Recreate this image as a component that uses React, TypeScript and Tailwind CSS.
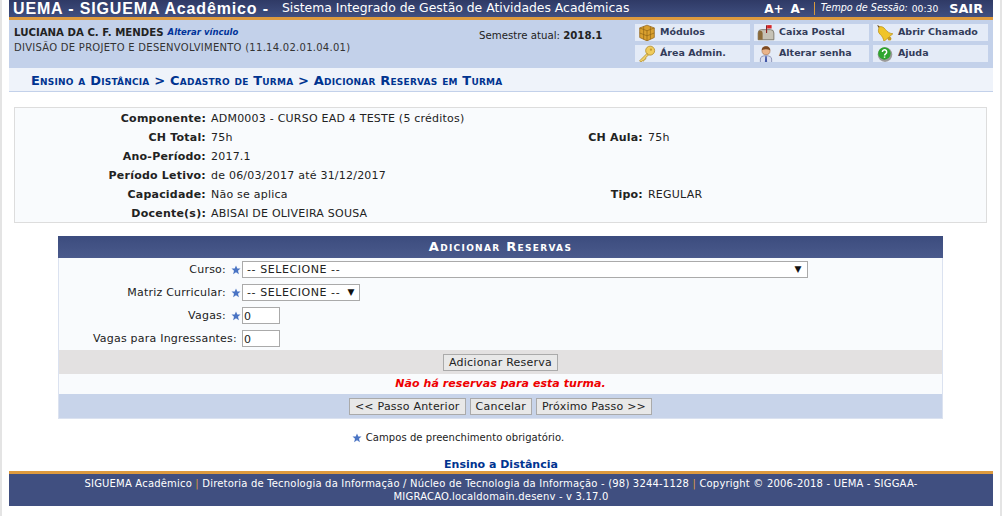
const verdana = "font-['Verdana','DejaVu_Sans',sans-serif]";

function Star() {
  return (
    <svg viewBox="0 0 10 10" className="h-[10px] w-[10px] shrink-0">
      <path d="M5 .6l1.3 3h3.2L7 5.7l.9 3.5L5 7.3 2.100 9.200 3 5.700.5 3.600h3.200z" fill="#4a74c4" />
    </svg>
  );
}

function BoxIcon() {
  return (
    <svg viewBox="0 0 16 16" className="h-[18px] w-[18px]">
      <path d="M1.500 3.500L8 1l6.500 2.500V12L8 15l-6.500-3z" fill="#d9a02f" stroke="#8a5a10" strokeWidth=".6" />
      <path d="M1.500 8L8 10.500 14.500 8M1.500 3.500L8 6l6.500-2.500M8 6v9M5 2.200v11.400M11 2.200v11.400" fill="none" stroke="#8f6414" strokeWidth=".6" />
    </svg>
  );
}

function KeyIcon() {
  return (
    <svg viewBox="0 0 16 16" className="h-[18px] w-[18px]">
      <circle cx="10.800" cy="5" r="4" fill="#f0cc5c" stroke="#b08a28" strokeWidth=".7" />
      <path d="M8 7.500L1.500 14l1 1.300 1.600-1.300 1 .3.500-1.500 1.200-.2.3-1.600 2-2z" fill="#f2d36c" stroke="#b08a28" strokeWidth=".7" />
      <circle cx="11.500" cy="4.200" r="1" fill="#c29a35" />
    </svg>
  );
}

function MailIcon() {
  return (
    <svg viewBox="0 0 16 16" className="h-[18px] w-[18px]">
      <path d="M1 8a3 3 0 013-3h8a3 3 0 013 3v6H1z" fill="#c6c2b6" stroke="#6f6a5c" strokeWidth=".7" />
      <path d="M1 8a2 2 0 014 0v6H1z" fill="#8a6a3a" />
      <path d="M8 1h1v7H8z" fill="#8c2020" />
      <path d="M9 1h4v3H9z" fill="#d62626" />
    </svg>
  );
}

function UserIcon() {
  return (
    <svg viewBox="0 0 16 16" className="h-[18px] w-[18px]">
      <path d="M3 16v-3.500C3 10.500 5 9.500 8 9.500s5 1 5 3V16z" fill="#d9def0" stroke="#6a74a0" strokeWidth=".6" />
      <path d="M7.300 10h1.400l.3 5-1 1-1-1z" fill="#4358a8" />
      <circle cx="8" cy="5" r="3.600" fill="#eab48a" stroke="#a06a40" strokeWidth=".5" />
      <path d="M4.300 4.600C4.400 2.200 6 1 8 1s3.600 1.200 3.700 3.600C9.500 3.400 6.500 3.400 4.300 4.600z" fill="#7c4a22" />
    </svg>
  );
}

function BellIcon() {
  return (
    <svg viewBox="0 0 16 16" className="h-[18px] w-[18px]">
      <path d="M1 .8l2.400 1.100-1 1.600z" fill="#6a4a10" />
      <path d="M3 2.500c2-.6 4 .4 5.500 2.500s4 3.500 6.500 3.700L7 15.500c-.2-2.500-1.700-5-3.500-6.500S1.800 5 3 2.500z" fill="#f0c428" stroke="#b58a10" strokeWidth=".6" />
      <circle cx="12" cy="13" r="1.700" fill="#c89a20" />
    </svg>
  );
}

function HelpIcon() {
  return (
    <svg viewBox="0 0 16 16" className="h-[18px] w-[18px]">
      <circle cx="8" cy="8.500" r="6.500" fill="#9a9a9a" />
      <circle cx="7.500" cy="7.500" r="5.500" fill="#2ea52e" />
      <path d="M5.700 6.200a1.900 1.900 0 113 1.500c-.7.500-1.100.8-1.100 1.600M7.600 10.300v1" fill="none" stroke="#fff" strokeWidth="1.300" />
    </svg>
  );
}

const shortcuts = [
  { label: "Módulos", icon: <BoxIcon /> },
  { label: "Caixa Postal", icon: <MailIcon /> },
  { label: "Abrir Chamado", icon: <BellIcon /> },
  { label: "Área Admin.", icon: <KeyIcon /> },
  { label: "Alterar senha", icon: <UserIcon /> },
  { label: "Ajuda", icon: <HelpIcon /> },
];

const details = [
  { label: "Componente:", value: "ADM0003 - CURSO EAD 4 TESTE (5 créditos)" },
  { label: "CH Total:", value: "75h", label2: "CH Aula:", value2: "75h" },
  { label: "Ano-Período:", value: "2017.1" },
  { label: "Período Letivo:", value: "de 06/03/2017 até 31/12/2017" },
  { label: "Capacidade:", value: "Não se aplica", label2: "Tipo:", value2: "REGULAR" },
  { label: "Docente(s):", value: "ABISAI DE OLIVEIRA SOUSA" },
];

function FormRow({ label, required, children }: { label: string; required?: boolean; children: React.ReactNode }) {
  return (
    <div className="flex h-[23px] items-center">
      <div className="flex w-[182px] shrink-0 items-center justify-end pt-[1px] text-[#222]">
        <span>{label}</span>
        {required ? <span className="ml-[5px] flex w-[10px]"><Star /></span> : <span className="w-[4px]" />}
      </div>
      <div className="ml-[1px]">{children}</div>
    </div>
  );
}

function Btn({ children }: { children: React.ReactNode }) {
  return (
    <button className="h-[17px] border border-[#aaa] bg-[#e8e8e8] px-[5px] text-[11px] leading-[15px] tracking-[0.22px] text-[#222]">
      {children}
    </button>
  );
}

export default function App() {
  return (
    <div className={`${verdana} h-[516px] w-[1002px] overflow-hidden bg-white text-[11px] tracking-[0.22px] text-[#222]`}>
      <div className="flex h-[516px]">
        <div className="w-[9px] shrink-0 border-l-2 border-[#e4e4e4]" />
        <div className="flex w-[984px] shrink-0 flex-col">
          <header className="flex h-[17px] items-center bg-gradient-to-b from-[#2f3a66] to-[#404f80] tracking-normal text-white">
            <span className="ml-[4px] whitespace-nowrap font-['Liberation_Sans',Arial,sans-serif] text-[16px] font-bold tracking-[0.85px]">UEMA - SIGUEMA Acadêmico -</span>
            <span className="ml-[13px] whitespace-nowrap text-[12.4px]">Sistema Integrado de Gestão de Atividades Acadêmicas</span>
            <div className="ml-auto flex items-center">
              <span className="text-[12px] font-bold">A+</span>
              <span className="ml-[7px] text-[12px] font-bold">A-</span>
              <span className="ml-[9px] h-[13px] border-l border-[#d99a3c]" />
              <span className="ml-[6px] text-[9.6px] italic">Tempo de Sessão:</span>
              <span className="ml-[4px] text-[9.2px]">00:30</span>
              <span className="ml-[11px] mr-[10px] text-[12.800px] font-bold">SAIR</span>
            </div>
          </header>
          <div className="h-[3px] bg-[#dd9a3e]" />
          <div className="flex h-[48px] bg-[#c3d1ea]">
            <div className="w-[457px] shrink-0 pl-[5px] pt-[5px] text-[10px]">
              <div className="flex h-[15px] items-center tracking-normal">
                <b className="text-[10.2px] text-[#222]">LUCIANA DA C. F. MENDES</b>
                <i className="ml-[4px] text-[8.5px] font-bold text-[#003399]">Alterar vínculo</i>
              </div>
              <div className="whitespace-nowrap leading-[15px] tracking-[0.27px] text-[#333]">DIVISÃO DE PROJETO E DESENVOLVIMENTO (11.14.02.01.04.01)</div>
            </div>
            <div className="w-[169px] shrink-0 pl-[13px] pt-[9px] text-[10.200px] leading-[13px] tracking-normal">
              Semestre atual: <b>2018.1</b>
            </div>
            <div className="grid grid-cols-[115px_115px_115px] content-start gap-x-[4px] gap-y-[4px] pt-[4px]">
              {shortcuts.map((s) => (
                <div key={s.label} className="flex h-[17px] items-center overflow-hidden bg-[#e4ebf7] pl-[3px]">
                  <span className="flex w-[22px] shrink-0">{s.icon}</span>
                  <span className="whitespace-nowrap text-[9.5px] font-bold tracking-normal text-[#333c5a]">{s.label}</span>
                </div>
              ))}
            </div>
          </div>
          <nav className="flex h-[24px] items-center border-b border-[#c3d1ea] bg-[#eff3fa] pl-[22px] pt-[3px] text-[13px] font-bold tracking-[0.2px] text-[#003390] [font-variant:small-caps]">
            Ensino a Distância &gt; Cadastro de Turma &gt; Adicionar Reservas em Turma
          </nav>

          <section className="ml-[5px] mt-[15px] h-[116px] w-[973px] border border-[#ddd] bg-[#f9fbfd] py-[2px]">
            {details.map((d) => (
              <div key={d.label} className="flex h-[19px] items-center">
                <b className="w-[191px] shrink-0 text-right text-[#222]">{d.label}</b>
                <span className="ml-[5px] w-[372px] shrink-0 whitespace-nowrap">{d.value}</span>
                {d.label2 ? <b className="w-[60px] text-right">{d.label2}</b> : null}
                {d.value2 ? <span className="ml-[5px]">{d.value2}</span> : null}
              </div>
            ))}
          </section>

          <section className="ml-[49px] mt-[13px] w-[885px] border-x border-b border-[#dbe2f0]">
            <div className="-mx-[1px] flex h-[22px] items-center justify-center bg-gradient-to-b from-[#3c4c7e] to-[#4a5a8c] text-[13px] font-bold tracking-[1.3px] text-white [font-variant:small-caps]">
              Adicionar Reservas
            </div>
            <div className="bg-[#f9fbfd]">
              <FormRow label="Curso:" required>
                <div className="relative flex h-[17px] w-[566px] items-center border border-[#aaa] bg-white pl-[4px] pt-[1px] tracking-[0.57px] text-[#222]">
                  -- SELECIONE --
                  <span className="absolute right-[5px] top-[0px] text-[9px] leading-[14px] text-[#111]">▼</span>
                </div>
              </FormRow>
              <FormRow label="Matriz Curricular:" required>
                <div className="flex h-[17px] w-[118px] items-center justify-between border border-[#aaa] bg-white pl-[4px] pr-[4px] pt-[1px] tracking-[0.57px]">
                  -- SELECIONE --
                  <span className="text-[9px] text-[#111]">▼</span>
                </div>
              </FormRow>
              <FormRow label="Vagas:" required>
                <input readOnly value="0" className="block h-[17px] w-[38px] border border-[#aaa] bg-white pl-[1px] pt-[1px] outline-none" />
              </FormRow>
              <FormRow label="Vagas para Ingressantes:">
                <input readOnly value="0" className="block h-[17px] w-[38px] border border-[#aaa] bg-white pl-[1px] pt-[1px] outline-none" />
              </FormRow>
            </div>
            <div className="flex h-[24px] items-center justify-center bg-[#e3e1e1]">
              <Btn>Adicionar Reserva</Btn>
            </div>
            <div className="flex h-[20px] items-center justify-center bg-[#f9fbfd] text-[11px] font-bold italic tracking-[0.06px] text-[#ee0000]">
              Não há reservas para esta turma.
            </div>
            <div className="flex h-[24px] items-center justify-center gap-[4px] bg-[#c8d4ea]">
              <Btn>&lt;&lt; Passo Anterior</Btn>
              <Btn>Cancelar</Btn>
              <Btn>Próximo Passo &gt;&gt;</Btn>
            </div>
          </section>

          <div className="mt-[12px] flex items-center justify-center pr-[86px] text-[10px] leading-[14px] tracking-[0.06px]">
            <Star />
            <span className="ml-[4px]">Campos de preenchimento obrigatório.</span>
          </div>
          <div className="mt-[13px] h-[13px] text-center text-[11px] font-semibold leading-[13px] tracking-normal text-[#003390]">Ensino a Distância</div>
          <div className="h-[3px] bg-[#dd9a3e]" />
          <footer className="h-[32px] bg-[#404f80] px-[60px] pt-[3px] text-center text-[10px] leading-[13px] tracking-[0.19px] text-white">
            SIGUEMA Acadêmico <span className="text-[#dd9a3e]">|</span> Diretoria de Tecnologia da Informação / Núcleo de Tecnologia da Informação - (98) 3244-1128 <span className="text-[#dd9a3e]">|</span> Copyright © 2006-2018 - UEMA - SIGGAA-MIGRACAO.localdomain.desenv - v 3.17.0
          </footer>
        </div>
        <div className="flex-1 border-r-2 border-[#e4e4e4]" />
      </div>
    </div>
  );
}
